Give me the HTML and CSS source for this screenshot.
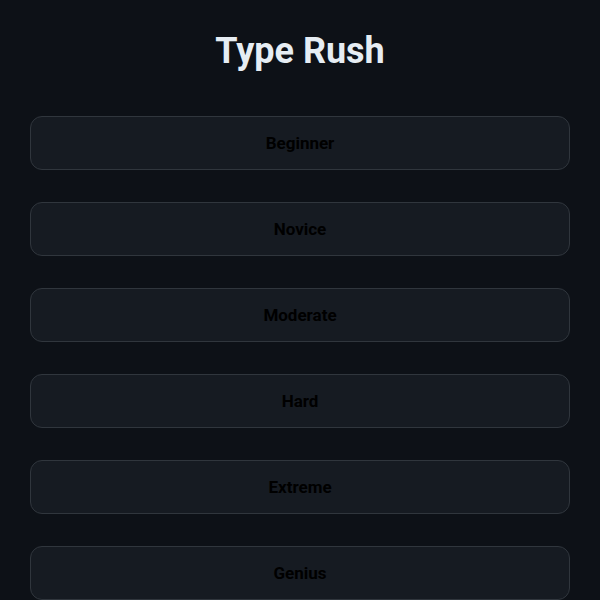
FILE: index.html
```html
<!DOCTYPE html>
<html>
<head>
<meta charset="utf-8">
<link rel="stylesheet" href="styles.css">
</head>
<body>
<div class="app">
  <h1 class="title">Type Rush</h1>
  <div class="levels">
    <button class="level">Beginner</button>
    <button class="level">Novice</button>
    <button class="level">Moderate</button>
    <button class="level">Hard</button>
    <button class="level">Extreme</button>
    <button class="level">Genius</button>
  </div>
</div>
</body>
</html>
```
FILE: styles.css
```css
html, body {
  margin: 0;
  padding: 0;
  background: #0d1117;
  height: 100%;
  overflow: hidden;
}
.app {
  padding: 0 30px;
  font-family: Roboto, "Liberation Sans", sans-serif;
}
.title {
  margin: 0;
  padding-top: 30px;
  height: 116px;
  box-sizing: border-box;
  text-align: center;
  color: #e6edf3;
  font-size: 36px;
  font-weight: 700;
  line-height: 42px;
}
.levels {
  display: flex;
  flex-direction: column;
  gap: 32px;
}
.level {
  height: 54px;
  background: #161b22;
  border: 1px solid #30363d;
  border-radius: 12px;
  color: #000;
  font-family: Roboto, "Liberation Sans", sans-serif;
  font-size: 17px;
  font-weight: 700;
  padding: 0;
}
```
